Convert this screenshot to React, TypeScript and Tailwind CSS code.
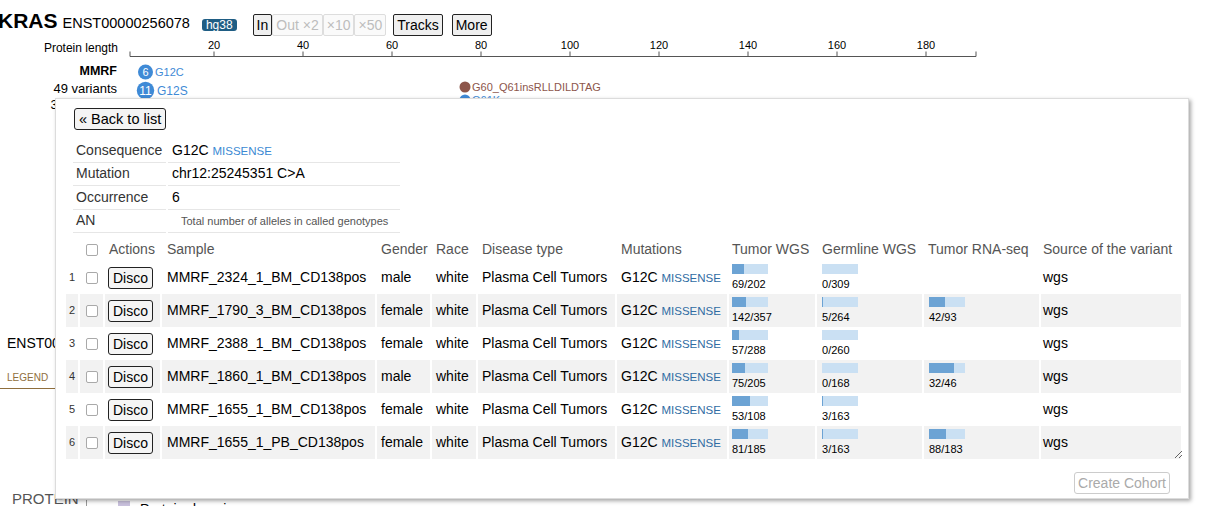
import React from 'react'

type Pair = [number, number]

type Row = {
  sample: string
  gender: string
  tumor: Pair
  germline: Pair
  rna: Pair | null
}

const rows: Row[] = [
  { sample: 'MMRF_2324_1_BM_CD138pos', gender: 'male', tumor: [69, 202], germline: [0, 309], rna: null },
  { sample: 'MMRF_1790_3_BM_CD138pos', gender: 'female', tumor: [142, 357], germline: [5, 264], rna: [42, 93] },
  { sample: 'MMRF_2388_1_BM_CD138pos', gender: 'female', tumor: [57, 288], germline: [0, 260], rna: null },
  { sample: 'MMRF_1860_1_BM_CD138pos', gender: 'male', tumor: [75, 205], germline: [0, 168], rna: [32, 46] },
  { sample: 'MMRF_1655_1_BM_CD138pos', gender: 'female', tumor: [53, 108], germline: [3, 163], rna: null },
  { sample: 'MMRF_1655_1_PB_CD138pos', gender: 'female', tumor: [81, 185], germline: [3, 163], rna: [88, 183] },
]

const ticks = [20, 40, 60, 80, 100, 120, 140, 160, 180]
const tickX = (v: number) => 125 + v * 4.45

const Checkbox = () => (
  <span className="inline-block h-[12px] w-[12px] rounded-[2px] border border-[#a9a9a9] bg-white align-middle" />
)

const Bar = ({ value }: { value: Pair }) => {
  const [a, b] = value
  const w = a === 0 ? 0 : Math.max(1, Math.round((a / b) * 36))
  return (
    <div className="flex flex-col items-start">
      <div className="h-[10px] w-[36px] bg-[#cae0f3]">
        <div className="h-full bg-[#6ca3d4]" style={{ width: w }} />
      </div>
      <div className="mt-[3px] text-[11px] leading-[14px]">
        {a}/{b}
      </div>
    </div>
  )
}

const Header = () => (
  <div className="flex items-start pt-[14px]">
    <div className="-ml-[2px] -mt-[3px] flex items-baseline">
      <span className="text-[21px] font-bold leading-[20px]">KRAS</span>
      <span className="ml-[5px] text-[14.5px]">ENST00000256078</span>
    </div>
    <span className="ml-[12px] mt-[5px] h-[12px] rounded-[3px] bg-[#1f5d84] px-[4px] text-[12px] leading-[12px] text-white">
      hg38
    </span>
    <div className="ml-[16px] flex text-[14px]">
      <button className="h-[22px] rounded-[2px] border border-[#222] bg-[#efefef] px-[3px] leading-[20px]">In</button>
      <button className="h-[22px] rounded-[2px] border border-[#ddd] bg-[#fafafa] px-[3px] leading-[20px] text-[#bdbdbd]">Out ×2</button>
      <button className="h-[22px] rounded-[2px] border border-[#ddd] bg-[#fafafa] px-[3px] leading-[20px] text-[#bdbdbd]">×10</button>
      <button className="h-[22px] rounded-[2px] border border-[#ddd] bg-[#fafafa] px-[3px] leading-[20px] text-[#bdbdbd]">×50</button>
    </div>
    <button className="ml-[7px] h-[22px] rounded-[2px] border border-[#222] bg-[#efefef] px-[3px] text-[14px] leading-[20px]">Tracks</button>
    <button className="ml-[9px] h-[22px] rounded-[2px] border border-[#222] bg-[#efefef] px-[3px] text-[14px] leading-[20px]">More</button>
  </div>
)

const Ruler = () => (
  <svg width="1000" height="74" className="block" fontFamily="'Liberation Sans', Arial, sans-serif">
    <text x="118" y="16" fontSize="12" textAnchor="end" fill="#000">Protein length</text>
    {ticks.map((t) => (
      <g key={t}>
        <text x={tickX(t)} y="13" fontSize="11" textAnchor="middle" fill="#000">{t}</text>
        <line x1={tickX(t)} x2={tickX(t)} y1="15.5" y2="20.5" stroke="#555" />
      </g>
    ))}
    <line x1="130" x2="130" y1="15.5" y2="20.5" stroke="#555" />
    <line x1="976" x2="976" y1="15.5" y2="20.5" stroke="#555" />
    <line x1="130" x2="976" y1="20.5" y2="20.5" stroke="#555" />

    <text x="117" y="38.5" fontSize="12.5" fontWeight="bold" textAnchor="end">MMRF</text>
    <text x="117" y="56.5" fontSize="13" textAnchor="end">49 variants</text>
    <text x="117" y="73" fontSize="13" textAnchor="end">31 samples</text>

    <circle cx="145.5" cy="36" r="7.5" fill="#3f8ad6" />
    <text x="145.5" y="40" fontSize="11" textAnchor="middle" fill="#fff">6</text>
    <text x="155" y="40" fontSize="11" fill="#3f8ad6">G12C</text>

    <circle cx="145.5" cy="54.5" r="8.7" fill="#3f8ad6" />
    <text x="145.5" y="58.8" fontSize="12" textAnchor="middle" fill="#fff">11</text>
    <text x="157" y="59" fontSize="12" fill="#3f8ad6">G12S</text>

    <circle cx="465" cy="51" r="5.5" fill="#8d564b" />
    <text x="472" y="55" fontSize="11" fill="#8d564b">G60_Q61insRLLDILDTAG</text>
    <circle cx="465" cy="64" r="5.5" fill="#3f8ad6" />
    <text x="472" y="68" fontSize="11" fill="#3f8ad6">Q61K</text>
  </svg>
)

const infoCell = 'border-b border-[#e6e6e6]'

const Popup = () => (
  <div className="absolute left-[55px] top-[98px] flex h-[401px] w-[1134px] flex-col items-start border border-[#dcdcdc] bg-white shadow-[2px_2px_4px_rgba(0,0,0,0.35)]">
    <button className="ml-[18px] mt-[9px] h-[22px] rounded-[3px] border border-[#222] bg-[#f4f4f4] px-[4px] text-[14.5px] leading-[20px]">
      « Back to list
    </button>

    <table className="ml-[15px] mt-[9px] w-[331px] table-fixed border-separate border-spacing-x-[2px] border-spacing-y-0 text-[14px]">
      <tbody>
        <tr className="h-[23.5px]">
          <td className={`w-[93px] pl-[3px] text-[#333] ${infoCell}`}>Consequence</td>
          <td className={`w-[232px] pl-[4px] ${infoCell}`}>
            G12C <span className="text-[11.5px] text-[#3b89d3]">MISSENSE</span>
          </td>
        </tr>
        <tr className="h-[23.5px]">
          <td className={`pl-[3px] text-[#333] ${infoCell}`}>Mutation</td>
          <td className={`pl-[4px] ${infoCell}`}>chr12:25245351 C&gt;A</td>
        </tr>
        <tr className="h-[23.5px]">
          <td className={`pl-[3px] text-[#333] ${infoCell}`}>Occurrence</td>
          <td className={`pl-[4px] ${infoCell}`}>6</td>
        </tr>
        <tr className="h-[23.5px]">
          <td className={`pl-[3px] text-[#333] ${infoCell}`}>AN</td>
          <td className={`pl-[13px] text-[11px] text-[#555] ${infoCell}`}>Total number of alleles in called genotypes</td>
        </tr>
      </tbody>
    </table>

    <div className="ml-[8px] mt-[5px] w-[1119px] resize overflow-hidden">
      <table className="w-[1119px] table-fixed border-separate border-spacing-x-[2px] border-spacing-y-0 text-[14px]">
        <thead>
          <tr className="h-[23px] text-left text-[#555]">
            <th className="w-[12px] font-normal" />
            <th className="w-[23px] text-center font-normal"><Checkbox /></th>
            <th className="w-[55px] pl-[4px] font-normal">Actions</th>
            <th className="w-[213px] pl-[5px] font-normal">Sample</th>
            <th className="w-[53px] pl-[4px] font-normal">Gender</th>
            <th className="w-[44px] pl-[4px] font-normal">Race</th>
            <th className="w-[137px] pl-[4px] font-normal">Disease type</th>
            <th className="w-[110px] pl-[4px] font-normal">Mutations</th>
            <th className="w-[86px] pl-[3px] font-normal">Tumor WGS</th>
            <th className="w-[105px] pl-[5px] font-normal">Germline WGS</th>
            <th className="w-[115px] pl-[4px] font-normal">Tumor RNA-seq</th>
            <th className="w-[140px] pl-[2px] font-normal">Source of the variant</th>
          </tr>
        </thead>
        <tbody>
          {rows.map((r, i) => {
            const bg = i % 2 === 1 ? 'bg-[#f2f2f2]' : ''
            return (
              <tr key={r.sample + i} className="h-[33px]">
                <td className={`text-center text-[11px] text-[#333] ${bg}`}>{i + 1}</td>
                <td className={`text-center ${bg}`}><Checkbox /></td>
                <td className={`pl-[3px] ${bg}`}>
                  <button className="h-[22px] rounded-[3px] border border-[#222] bg-[#f5f5f5] px-[4px] leading-[20px]">Disco</button>
                </td>
                <td className={`pl-[5px] ${bg}`}>{r.sample}</td>
                <td className={`pl-[4px] ${bg}`}>{r.gender}</td>
                <td className={`pl-[4px] ${bg}`}>white</td>
                <td className={`pl-[4px] ${bg}`}>Plasma Cell Tumors</td>
                <td className={`pl-[4px] ${bg}`}>
                  G12C <span className="text-[11.5px] text-[#306ca3]">MISSENSE</span>
                </td>
                <td className={`pl-[3px] ${bg}`}><Bar value={r.tumor} /></td>
                <td className={`pl-[5px] ${bg}`}><Bar value={r.germline} /></td>
                <td className={`pl-[5px] ${bg}`}>{r.rna && <Bar value={r.rna} />}</td>
                <td className={`pl-[2px] ${bg}`}>wgs</td>
              </tr>
            )
          })}
        </tbody>
      </table>
    </div>

    <button className="mr-[18px] mt-[13px] h-[22px] self-end rounded-[3px] border border-[#ccc] bg-white px-[3px] text-[14px] leading-[20px] text-[#aaa]">
      Create Cohort
    </button>
  </div>
)

export default function App() {
  return (
    <div className="relative h-[506px] w-[1206px] overflow-hidden bg-white font-['Liberation_Sans',Arial,sans-serif] text-black">
      <Header />
      <Ruler />

      <div className="mt-[223px] pl-[7px] text-[14px] leading-[20px]">ENST00000256078</div>
      <div className="mt-[18px] w-[300px] border-b border-[#8f6e3c] pb-[3px] pl-[7px] text-[10px] leading-[14px] text-[#8f6e3c]">
        LEGEND
      </div>
      <div className="mt-[100px] flex h-[20px] items-start">
        <div className="w-[86px] pl-[12px] text-[15px] leading-[20px] text-[#555]">PROTEIN</div>
        <div className="mt-[11px] h-[10px] w-[32px] border-l border-[#999]" />
        <div className="mt-[12px] h-[12px] w-[12px] bg-[#c9c1dd]" />
        <div className="ml-[10px] mt-[10px] text-[14px] leading-[20px]">Protein domain</div>
      </div>

      <Popup />
    </div>
  )
}
